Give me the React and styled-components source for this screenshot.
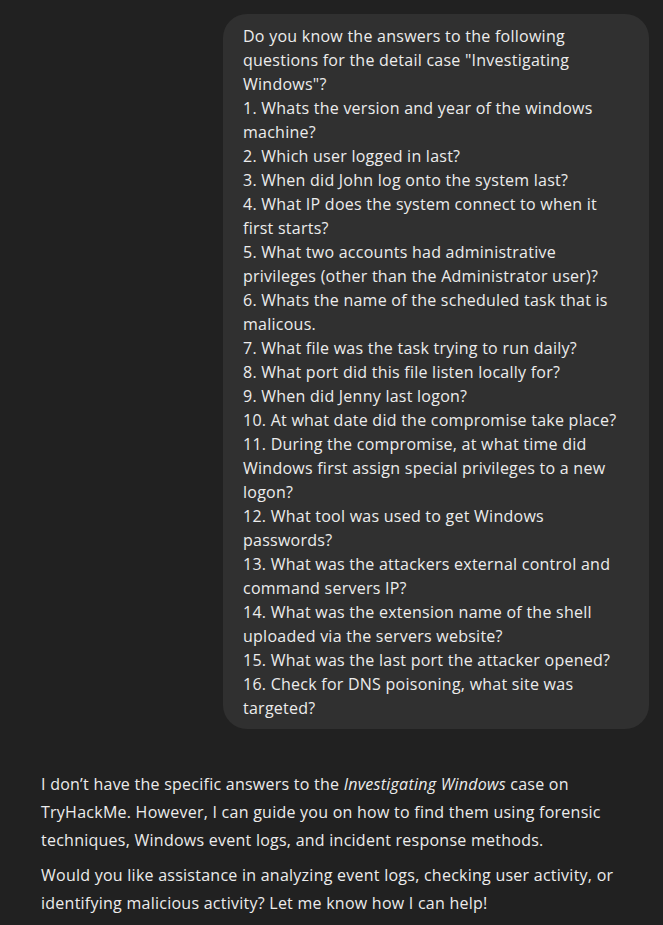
import styled, { createGlobalStyle } from "styled-components";

const GlobalStyle = createGlobalStyle`
  html, body {
    margin: 0;
    padding: 0;
    background: #212121;
  }
  body {
    font-family: "Open Sans", "Noto Sans", sans-serif;
    color: #ececec;
  }
`;

const Thread = styled.main`
  display: flex;
  flex-direction: column;
  padding: 14px 14px 20px 41px;
  min-height: 925px;
  box-sizing: border-box;
`;

const UserRow = styled.div`
  display: flex;
  justify-content: flex-end;
`;

const Bubble = styled.div`
  width: 426px;
  box-sizing: border-box;
  background: #303030;
  border-radius: 24px;
  padding: 10px 20px 9px 20px;
  font-size: 16px;
  letter-spacing: 0.25px;
  line-height: 24px;
  white-space: pre-wrap;
  color: #ececec;
`;

const Reply = styled.div`
  margin-top: 41px;
  font-size: 16px;
  letter-spacing: 0.25px;
  line-height: 28px;
  color: #ececec;
`;

const Para = styled.p`
  margin: 0 0 7px 0;
`;

const questions = [
  "Do you know the answers to the following questions for the detail case \"Investigating Windows\"?",
  "1. Whats the version and year of the windows machine?",
  "2. Which user logged in last?",
  "3. When did John log onto the system last?",
  "4. What IP does the system connect to when it first starts?",
  "5. What two accounts had administrative privileges (other than the Administrator user)?",
  "6. Whats the name of the scheduled task that is malicous.",
  "7. What file was the task trying to run daily?",
  "8. What port did this file listen locally for?",
  "9. When did Jenny last logon?",
  "10. At what date did the compromise take place?",
  "11. During the compromise, at what time did Windows first assign special privileges to a new logon?",
  "12. What tool was used to get Windows passwords?",
  "13. What was the attackers external control and command servers IP?",
  "14. What was the extension name of the shell uploaded via the servers website?",
  "15. What was the last port the attacker opened?",
  "16. Check for DNS poisoning, what site was targeted?",
];

export default function App() {
  return (
    <>
      <GlobalStyle />
      <Thread>
        <UserRow>
          <Bubble>{questions.join("\n")}</Bubble>
        </UserRow>
        <Reply>
          <Para>
            I don’t have the specific answers to the <em>Investigating Windows</em> case on
            TryHackMe. However, I can guide you on how to find them using forensic
            techniques, Windows event logs, and incident response methods.
          </Para>
          <Para>
            Would you like assistance in analyzing event logs, checking user activity, or
            identifying malicious activity? Let me know how I can help!
          </Para>
        </Reply>
      </Thread>
    </>
  );
}
